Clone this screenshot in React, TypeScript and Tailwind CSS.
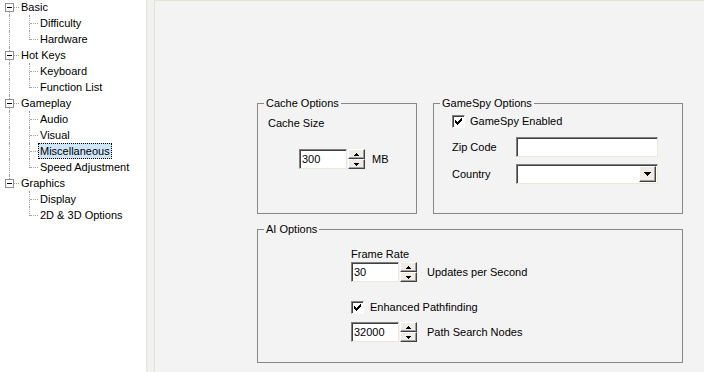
import React from "react"

interface TreeGroup {
  label: string
  children: string[]
}

const tree: TreeGroup[] = [
  { label: "Basic", children: ["Difficulty", "Hardware"] },
  { label: "Hot Keys", children: ["Keyboard", "Function List"] },
  { label: "Gameplay", children: ["Audio", "Visual", "Miscellaneous", "Speed Adjustment"] },
  { label: "Graphics", children: ["Display", "2D & 3D Options"] },
]

const selected = "Miscellaneous"

function Label({ text, active = false }: { text: string; active?: boolean }) {
  return (
    <span
      className={`px-px border leading-[14px] whitespace-nowrap ${
        active ? "bg-[#cfe6f8] border-dotted border-black" : "border-transparent"
      }`}
    >
      {text}
    </span>
  )
}

function RootRow({ text, first, last }: { text: string; first: boolean; last: boolean }) {
  return (
    <div className="flex h-4 items-center">
      <div className="relative w-[19px] h-4 shrink-0">
        {!first && <div className="absolute left-[9px] top-0 h-[4px] border-l border-dotted border-[#a0a0a0]" />}
        {!last && <div className="absolute left-[9px] top-[13px] h-[3px] border-l border-dotted border-[#a0a0a0]" />}
        <div className="absolute left-[5px] top-[4px] w-[9px] h-[9px] border border-[#919191] bg-white flex items-center justify-center">
          <div className="w-[5px] h-px bg-black" />
        </div>
        <div className="absolute left-[14px] top-[8px] w-[5px] border-t border-dotted border-[#a0a0a0]" />
      </div>
      <Label text={text} />
    </div>
  )
}

function ChildRow({ text, parentLast, last }: { text: string; parentLast: boolean; last: boolean }) {
  return (
    <div className="flex h-4 items-center">
      <div className="relative w-[20px] h-4 shrink-0">
        {!parentLast && <div className="absolute left-[9px] top-0 h-4 border-l border-dotted border-[#a0a0a0]" />}
      </div>
      <div className="relative w-[18px] h-4 shrink-0">
        <div
          className={`absolute left-[9px] top-0 border-l border-dotted border-[#a0a0a0] ${last ? "h-[9px]" : "h-4"}`}
        />
        <div className="absolute left-[10px] top-[8px] w-[8px] border-t border-dotted border-[#a0a0a0]" />
      </div>
      <Label text={text} active={text === selected} />
    </div>
  )
}

function UpDown() {
  return (
    <div className="flex flex-col ml-px">
      {["up", "down"].map((dir) => (
        <div
          key={dir}
          className="w-[17px] h-[10px] bg-[#efeee6] border-t border-l border-white border-r border-b border-r-[#404040] border-b-[#404040] shadow-[inset_-1px_-1px_0_#a0a0a0] flex items-center justify-center"
        >
          <svg width="5" height="3" viewBox="0 0 5 3" shapeRendering="crispEdges">
            {dir === "up" ? <polygon points="0,3 5,3 2.5,0" fill="#000" /> : <polygon points="0,0 5,0 2.5,3" fill="#000" />}
          </svg>
        </div>
      ))}
    </div>
  )
}

function Spinner({ value }: { value: string }) {
  return (
    <div className="flex items-start">
      <div className="w-[48px] h-[20px] bg-white border-t border-l border-[#808080] border-b border-r border-b-[#ece9d8] border-r-[#ece9d8] shadow-[inset_1px_1px_0_#404040] pl-[2px] leading-[18px]">
        {value}
      </div>
      <UpDown />
    </div>
  )
}

function CheckBox() {
  return (
    <div className="w-[13px] h-[13px] bg-white border-t border-l border-[#808080] border-b border-r border-b-white border-r-white shadow-[inset_1px_1px_0_#404040] flex items-center justify-center shrink-0">
      <svg width="7" height="7" viewBox="0 0 7 7" shapeRendering="crispEdges">
        <path d="M0 2h1v1h1v1h1v-1h1v-1h1v-1h1v-1h1v3h-1v1h-1v1h-1v1h-1v1h-1v-1h-1v-1h-1v-1h-1z" fill="#000" />
      </svg>
    </div>
  )
}

function GroupBox({ title, className, children }: { title: string; className: string; children?: React.ReactNode }) {
  return (
    <div className={`relative border border-[#888888] shrink-0 ${className}`}>
      <span className="absolute -top-[9px] left-[6px] px-[2px] bg-[#f3f3f3] leading-4">{title}</span>
      {children}
    </div>
  )
}

export default function App() {
  return (
    <div className="w-[704px] h-[372px] flex bg-white text-black text-[11px] font-['Liberation_Sans',Arial,sans-serif] overflow-hidden">
      {/* tree view */}
      <div className="w-[146px] shrink-0 bg-white -mt-px">
        {tree.map((g, gi) => (
          <div key={g.label}>
            <RootRow text={g.label} first={gi === 0} last={gi === tree.length - 1} />
            {g.children.map((c, ci) => (
              <ChildRow key={c} text={c} parentLast={gi === tree.length - 1} last={ci === g.children.length - 1} />
            ))}
          </div>
        ))}
      </div>

      {/* splitter */}
      <div className="w-[8px] shrink-0 border-l border-[#e4e3d4] bg-[#f1f1f1]" />

      {/* options page */}
      <div className="flex-1 border-l border-t border-[#e4e3d4] bg-[#f3f3f3] pl-[102px] pt-[102px] flex flex-col">
        <div className="flex gap-[16px]">
          <GroupBox title="Cache Options" className="w-[160px] h-[111px]">
            <div className="pl-[10px] pt-[11px] leading-4">Cache Size</div>
            <div className="flex items-center pl-[41px] mt-[18px]">
              <Spinner value="300" />
              <span className="ml-[7px]">MB</span>
            </div>
          </GroupBox>

          <GroupBox title="GameSpy Options" className="w-[250px] h-[111px]">
            <div className="pl-[18px] pt-[11px] flex flex-col">
              <div className="flex items-center h-[13px]">
                <CheckBox />
                <span className="ml-[5px]">GameSpy Enabled</span>
              </div>
              <div className="flex items-center mt-[9px]">
                <span className="w-[64px]">Zip Code</span>
                <div className="w-[142px] h-[20px] bg-white border-t border-l border-[#808080] border-b border-r border-b-[#ece9d8] border-r-[#ece9d8] shadow-[inset_1px_1px_0_#404040]" />
              </div>
              <div className="flex items-center mt-[7px]">
                <span className="w-[64px]">Country</span>
                <div className="w-[142px] h-[20px] bg-white border-t border-l border-[#808080] border-b border-r border-b-[#ece9d8] border-r-[#ece9d8] shadow-[inset_1px_1px_0_#404040] flex justify-end items-center pr-px">
                  <div className="w-[17px] h-[16px] bg-[#efeee6] border-t border-l border-white border-r border-b border-r-[#404040] border-b-[#404040] shadow-[inset_-1px_-1px_0_#a0a0a0] flex items-center justify-center">
                    <svg width="7" height="4" viewBox="0 0 7 4" shapeRendering="crispEdges">
                      <polygon points="0,0 7,0 3.5,4" fill="#000" />
                    </svg>
                  </div>
                </div>
              </div>
            </div>
          </GroupBox>
        </div>

        <GroupBox title="AI Options" className="w-[426px] h-[134px] mt-[15px]">
          <div className="pl-[93px] pt-[16px] flex flex-col">
            <div className="leading-4">Frame Rate</div>
            <div className="flex items-center">
              <Spinner value="30" />
              <span className="ml-[10px]">Updates per Second</span>
            </div>
            <div className="flex items-center h-[13px] mt-[19px]">
              <CheckBox />
              <span className="ml-[6px]">Enhanced Pathfinding</span>
            </div>
            <div className="flex items-center mt-[8px]">
              <Spinner value="32000" />
              <span className="ml-[10px]">Path Search Nodes</span>
            </div>
          </div>
        </GroupBox>
      </div>
    </div>
  )
}
